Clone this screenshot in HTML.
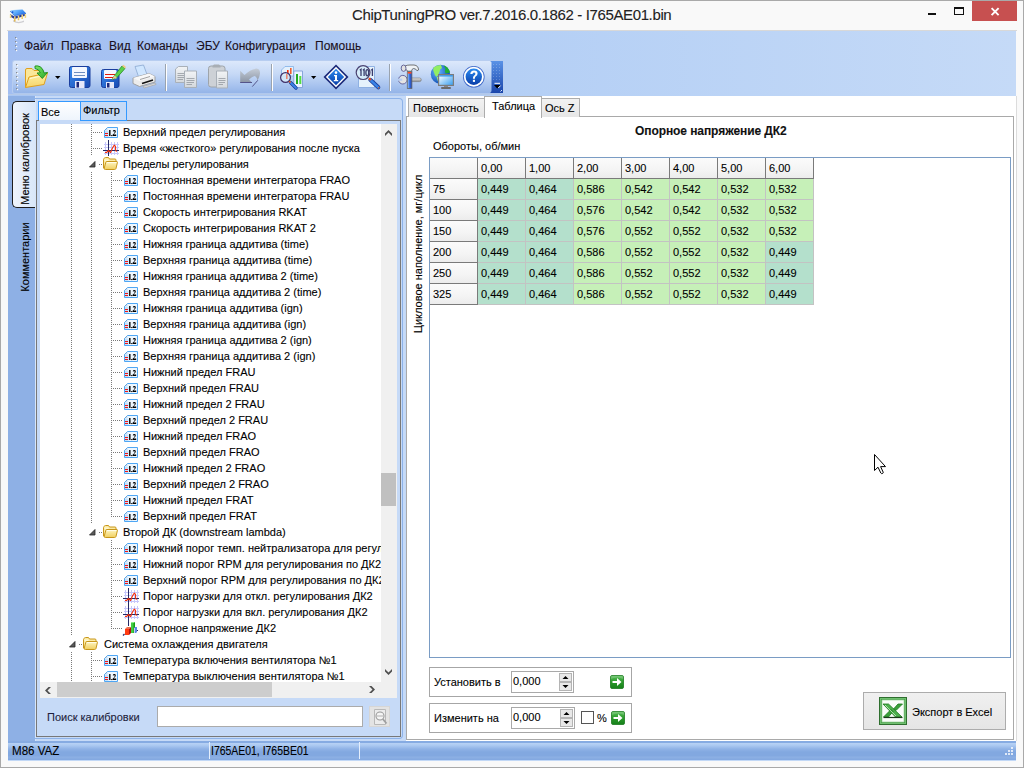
<!DOCTYPE html>
<html><head><meta charset="utf-8">
<style>
*{box-sizing:border-box}
html,body{margin:0;padding:0;width:1024px;height:768px;overflow:hidden;background:#f9f9f9}
body{position:relative;font-family:"Liberation Sans",sans-serif;font-size:11px;color:#000}
.a{position:absolute}
svg.a{overflow:visible}
.t{position:absolute;white-space:nowrap;font-size:11px;line-height:13px;-webkit-text-stroke:0.1px currentColor}
.m{position:absolute;white-space:nowrap;font-size:12px;line-height:14px;color:#1a1020;-webkit-text-stroke:0.1px currentColor}
.dv{position:absolute;width:1px;background:repeating-linear-gradient(180deg,#7a7a7a 0 1px,transparent 1px 2px)}
.dh{position:absolute;height:1px;background:repeating-linear-gradient(90deg,#7a7a7a 0 1px,transparent 1px 2px)}
.c{position:absolute;border-right:1px solid #c3c3c3;border-bottom:1px solid #c3c3c3}
.hc{position:absolute;background:linear-gradient(180deg,#fbfbfb 0%,#f4f4f4 60%,#ececec 100%);border-right:1px solid #7a7a7a;border-bottom:1px solid #7a7a7a}
</style></head><body>

<svg width="0" height="0" style="position:absolute">
<defs>
<linearGradient id="g12" x1="0" y1="0" x2="0" y2="1"><stop offset="0" stop-color="#f4faff"/><stop offset="1" stop-color="#cfe6fb"/></linearGradient>
<linearGradient id="gfold" x1="0" y1="0" x2="0" y2="1"><stop offset="0" stop-color="#fff6c0"/><stop offset="1" stop-color="#f0cf60"/></linearGradient>
<symbol id="i12" viewBox="0 0 14 11">
 <path d="M3.5 0.5 H13.5 V10.5 H0.5 V3.5 Z" fill="#eef7ff" stroke="#4ea6f4"/>
 <path d="M1 4 H4.5 V10 H1 Z" fill="#c4e2fc"/>
 <path d="M1 3.5 L3.5 1 V3.5 Z" fill="#bcdaf5"/>
 <path d="M0.5 3.5 L3.5 0.5" stroke="#6d9cc8" stroke-width="0.9" stroke-dasharray="0.8 0.6"/>
 <rect x="1" y="6" width="3" height="1" fill="#f01414"/>
 <rect x="1" y="8" width="3" height="1" fill="#f01414"/>
 <rect x="5.1" y="3" width="1.4" height="6" fill="#000"/>
 <rect x="7.2" y="8" width="1.1" height="1.1" fill="#000"/>
 <path d="M8.7 4.2 Q9 3 10.3 3 Q11.8 3 11.8 4.4 Q11.8 5.4 10.6 6.6 L9.6 7.6 H12.2 V9 H8.6 V7.8 L10.2 6.2 Q10.6 5.7 10.6 4.6 Q10.6 4.1 10.2 4.1 Q9.9 4.1 9.8 4.6 Z" fill="#000"/>
</symbol>
<symbol id="igraph" viewBox="0 0 16 16">
 <path d="M2.5 2V15 M8.5 2V15 M11.5 2V15 M14.5 2V15 M1 4.5H16 M1 7.5H16 M1 13.5H16" stroke="#c6c6fb" stroke-width="1"/>
 <path d="M5.5 0V16 M0 10.5H16" stroke="#252a66" stroke-width="1"/>
 <path d="M2 12.5 L3.5 12.5 L4.5 11.5 L5.5 10.5 L7.5 12.5 L8.5 10.5 L8.8 9.5 L9.5 8 L10.5 6.2 L11.5 5.2 L12.5 6.5 L12.6 10 L13.5 11.8" fill="none" stroke="#f5300a" stroke-width="1.1" stroke-linejoin="round"/>
</symbol>
<symbol id="ifold" viewBox="0 0 16 14">
 <path d="M1.5 12 V3.5 Q1.5 2.5 2.5 2 L3.5 1.5 H6.5 L7.5 3 H13 Q14 3 14 4 V7 L2 12.5 Z" fill="#fbeaa2" stroke="#c8961a"/>
 <path d="M2.5 3.5 H6.5 V5 H2.5 Z" fill="#fff8d0"/>
 <path d="M2.2 12.3 L3.8 6.3 Q4 5.5 5 5.5 H15 Q15.6 5.6 15.4 6.5 L14 12.5 Q13.6 13.5 12.6 13.5 H3.5 Q2 13.5 2.2 12.3 Z" fill="url(#gfold)" stroke="#c8961a"/>
 <path d="M4.8 6.6 H14.3" stroke="#fffef0" stroke-width="1"/>
</symbol>
<symbol id="ibar" viewBox="0 0 16 16">
 <path d="M6.5 0V6" stroke="#252a66"/>
 <path d="M1 15.5 L2.5 14" stroke="#252a66" stroke-width="1.2"/>
 <path d="M15 10.5 H17" stroke="#252a66" stroke-width="1.2"/>
 <path d="M3 9 H7 V15 H3 Z" fill="#ff3a10"/>
 <path d="M3 9 L5 7 H9 L7 9 Z" fill="#f07050"/>
 <path d="M7 9 L9 7 V13 L7 15 Z" fill="#b01010"/>
 <path d="M9 3 L10 2 H13 V13 H9 Z" fill="#44cc44"/>
 <path d="M11.5 2 H13 V12 L12 13 H11.5 Z" fill="#14a014"/>
 <path d="M9 3 L10 2 H13 L12 3 Z" fill="#88f088"/>
 <path d="M12 8 L13 7 H15 V12 L14 13 H12 Z" fill="#5a8ae0"/>
 <path d="M12 8 H13 V13 H12 Z" fill="#c8c8ff"/>
</symbol>
<symbol id="iexp" viewBox="0 0 7 7">
 <path d="M6 0.5 V6 H0.5 Z" fill="#595959" stroke="#262626" stroke-width="0.8" stroke-linejoin="round"/>
</symbol>
</defs></svg>

<div class="a" style="left:0;top:0;width:1024px;height:768px;border:1px solid #a9a9a9;background:#f9f9f9"></div>
<svg class="a" style="left:0;top:0" width="40" height="30" viewBox="0 0 40 30">
<defs><linearGradient id="chipTop" x1="0" y1="0" x2="1" y2="0.6"><stop offset="0" stop-color="#a8d8ff"/><stop offset="0.5" stop-color="#5aa8f8"/><stop offset="1" stop-color="#1e6ee8"/></linearGradient>
<linearGradient id="pinG" x1="0" y1="0" x2="0" y2="1"><stop offset="0" stop-color="#ffe890"/><stop offset="1" stop-color="#e0b040"/></linearGradient></defs>
<path d="M13 20 Q18 23.5 24 20.5 L24 22 Q18 24.5 13 21.5 Z" fill="#b0b0b8" opacity="0.6"/>
<path d="M10 14 L14.5 16.5 L26 13.5 L26 15.5 L14.5 19 L10 16.5 Z" fill="#2a3a90"/>
<path d="M10 11 Q11 10 13 10 L22.5 9.6 L26 13.3 L14.5 15.8 Z" fill="url(#chipTop)"/>
<path d="M10 11 L14.5 15.8 L26 13.3" fill="none" stroke="#1a5ad0" stroke-width="0.6"/>
<circle cx="12.6" cy="12.1" r="0.9" fill="#0a50d8"/>
<path d="M10.6 14.5 V18 M14.8 16.6 V21.5 M18.5 15.8 V20.3 M22.2 14.8 V19 M25.4 14 V17.8" stroke="url(#pinG)" stroke-width="1.5"/>
</svg>
<div class="t" style="left:352px;top:7px;font-size:15px;line-height:16px;letter-spacing:-0.37px;color:#222">ChipTuningPRO ver.7.2016.0.1862 - I765AE01.bin</div>
<div class="a" style="left:928px;top:13px;width:8px;height:2px;background:#111"></div>
<div class="a" style="left:954px;top:7px;width:10px;height:8px;border:1px solid #111;border-top-width:2px"></div>
<div class="a" style="left:972px;top:1px;width:45px;height:20px;background:#c75050"></div>
<svg class="a" style="left:990px;top:7px" width="10" height="9" viewBox="0 0 10 9"><path d="M1.6 1.2 L8.6 8.2 M8.6 1.2 L1.6 8.2" stroke="#fff" stroke-width="1.9"/></svg>
<div class="a" style="left:7px;top:30px;width:1010px;height:1px;background:#d8d8d8"></div>
<div class="a" style="left:8px;top:31px;width:1008px;height:730px;background:#c2d8f6"></div>
<div class="a" style="left:8px;top:31px;width:1008px;height:65px;background:linear-gradient(90deg,#a2bef1 0%,#b4cff5 50%,#c5daf7 100%)"></div>
<svg class="a" style="left:14px;top:36px" width="5" height="18"><rect x="1" y="1" width="1.2" height="1.2" fill="#8a8a8a"/><rect x="2" y="2" width="1.2" height="1.2" fill="#fff"/><rect x="1" y="5" width="1.2" height="1.2" fill="#8a8a8a"/><rect x="2" y="6" width="1.2" height="1.2" fill="#fff"/><rect x="1" y="9" width="1.2" height="1.2" fill="#8a8a8a"/><rect x="2" y="10" width="1.2" height="1.2" fill="#fff"/><rect x="1" y="13" width="1.2" height="1.2" fill="#8a8a8a"/><rect x="2" y="14" width="1.2" height="1.2" fill="#fff"/></svg>
<div class="m" style="left:24px;top:39px">Файл</div>
<div class="m" style="left:61px;top:39px">Правка</div>
<div class="m" style="left:109px;top:39px">Вид</div>
<div class="m" style="left:137px;top:39px">Команды</div>
<div class="m" style="left:196px;top:39px">ЭБУ</div>
<div class="m" style="left:225px;top:39px">Конфигурация</div>
<div class="m" style="left:315px;top:39px">Помощь</div>
<div class="a" style="left:8px;top:94px;width:496px;height:1px;background:#b4c9e8"></div>
<div class="a" style="left:8px;top:95px;width:397px;height:1px;background:#a9c6f3"></div>
<div class="a" style="left:12px;top:60px;width:492px;height:34px;border-radius:3px;background:linear-gradient(180deg,#dce8fb 0%,#c6d9f6 40%,#a9c4ef 75%,#94b4e8 100%);border:1px solid #b7cdf0;border-bottom-color:#b0c8ee"></div>
<svg class="a" style="left:15px;top:63px" width="5" height="30"><rect x="1" y="1" width="1.2" height="1.2" fill="#8a8a8a"/><rect x="2" y="2" width="1.2" height="1.2" fill="#fff"/><rect x="1" y="5" width="1.2" height="1.2" fill="#8a8a8a"/><rect x="2" y="6" width="1.2" height="1.2" fill="#fff"/><rect x="1" y="9" width="1.2" height="1.2" fill="#8a8a8a"/><rect x="2" y="10" width="1.2" height="1.2" fill="#fff"/><rect x="1" y="13" width="1.2" height="1.2" fill="#8a8a8a"/><rect x="2" y="14" width="1.2" height="1.2" fill="#fff"/><rect x="1" y="17" width="1.2" height="1.2" fill="#8a8a8a"/><rect x="2" y="18" width="1.2" height="1.2" fill="#fff"/><rect x="1" y="21" width="1.2" height="1.2" fill="#8a8a8a"/><rect x="2" y="22" width="1.2" height="1.2" fill="#fff"/><rect x="1" y="25" width="1.2" height="1.2" fill="#8a8a8a"/><rect x="2" y="26" width="1.2" height="1.2" fill="#fff"/></svg>
<svg class="a" style="left:0;top:0" width="520" height="100" viewBox="0 0 520 100">
<defs>
<linearGradient id="tgFold" x1="0" y1="0" x2="0" y2="1"><stop offset="0" stop-color="#fff2a8"/><stop offset="1" stop-color="#f6d46a"/></linearGradient>
<linearGradient id="tgGreen" x1="0" y1="0" x2="1" y2="1"><stop offset="0" stop-color="#7ee86a"/><stop offset="1" stop-color="#2aa82a"/></linearGradient>
<linearGradient id="tgFlop" x1="0" y1="0" x2="1" y2="1"><stop offset="0" stop-color="#3a8ef0"/><stop offset="1" stop-color="#1848b0"/></linearGradient>
<linearGradient id="tgBlue" x1="0" y1="0" x2="0" y2="1"><stop offset="0" stop-color="#2a8af0"/><stop offset="1" stop-color="#0a3ea8"/></linearGradient>
<linearGradient id="tgOver" x1="0" y1="0" x2="0" y2="1"><stop offset="0" stop-color="#5a92e6"/><stop offset="1" stop-color="#1a46ac"/></linearGradient>
<linearGradient id="tgGray" x1="0" y1="0" x2="0" y2="1"><stop offset="0" stop-color="#f2f4f6"/><stop offset="1" stop-color="#d4d8dc"/></linearGradient>
<radialGradient id="tgGlobe" cx="0.35" cy="0.35" r="0.7"><stop offset="0" stop-color="#6ab8ff"/><stop offset="1" stop-color="#0a48b0"/></radialGradient>
</defs>
<!-- open folder -->
<path d="M25.5 87 V70 Q25.5 68.5 27 68.5 H32 L34 70.5 H41 V76 Z" fill="#fbe79a" stroke="#e0a01e"/>
<path d="M25.5 87.5 L29 77 L47.5 73 L44 84.5 Z" fill="url(#tgFold)" stroke="#e0a01e" stroke-linejoin="round"/>
<path d="M30 78.5 L45.5 75" stroke="#fff8d8" stroke-width="1"/>
<path d="M35 66 Q41 65 43.5 71 L44 73 L47.5 72.5 L42.3 78.5 L37 73 L40.3 72.8 Q39 69 35 68.5 Z" fill="url(#tgGreen)" stroke="#1a8a1a" stroke-width="0.9" stroke-linejoin="round"/>
<path d="M55 76 H60.5 L57.75 79 Z" fill="#000"/>
<!-- save -->
<rect x="69.5" y="66.5" width="20.5" height="21" rx="2" fill="url(#tgFlop)" stroke="#1a3e9e"/>
<rect x="72" y="67" width="15" height="11" rx="1" fill="#f4f8ff"/>
<path d="M74 72.5 H85 M74 75.5 H85" stroke="#6f8fc0" stroke-width="1"/>
<rect x="75" y="81" width="9.5" height="7" fill="#e6e8fa"/>
<rect x="76.5" y="82" width="2.5" height="5.5" fill="#1e2a7a"/>
<!-- save as -->
<rect x="101.5" y="69.5" width="17.5" height="18" rx="2" fill="url(#tgFlop)" stroke="#1a3e9e"/>
<rect x="104" y="70" width="12.5" height="9" rx="1" fill="#f4f8ff"/>
<path d="M105 74.5 H115 M105 77.5 H115" stroke="#e01a0a" stroke-width="1"/>
<rect x="106" y="82" width="8" height="6" fill="#e6e8fa"/>
<rect x="107" y="83" width="2.5" height="4.5" fill="#1e2a7a"/>
<path d="M112 79.5 L114.5 75.5 L122 66 L125 68.5 L117 77.5 Z" fill="#5ad24a" stroke="#2a8a2a" stroke-width="0.8"/>
<path d="M122 66 L123.5 64.8 L126 67 L125 68.5 Z" fill="#f0c880"/>
<path d="M112 79.5 L114.5 75.5 L117 77.5 Z" fill="#e8c890"/>
<!-- printer -->
<path d="M135 66.5 L143.5 65 L147 74.5 L138.5 76.5 Z" fill="#cfe6ff" stroke="#8aa8d0" stroke-width="0.8"/>
<path d="M133 78 L149 73.5 L155 76.5 L155 82 L139.5 86.5 L133 83.5 Z" fill="#ececec" stroke="#9a9a9a" stroke-width="0.9" stroke-linejoin="round"/>
<path d="M133 78 L149 73.5 L155 76.5 L139.5 81 Z" fill="#f8f8f8"/>
<path d="M142 83.5 L153 80" stroke="#111" stroke-width="1.6"/>
<path d="M143 86.5 L155.5 83 L156 84.5 L144 88 Z" fill="#dcdcdc" stroke="#a0a0a0" stroke-width="0.6"/>
<path d="M140 79.5 L150 76.5" stroke="#8a8a8a" stroke-width="0.8"/>
<!-- separator -->
<path d="M165.5 64 V91" stroke="#9aa3ae"/><path d="M166.5 64 V91" stroke="#fff"/>
<!-- copy (disabled) -->
<path d="M175.5 69 L178.5 66.5 H187.5 V82.5 H175.5 Z" fill="url(#tgGray)" stroke="#a9b0b8"/>
<path d="M177.5 73.5 H185 M177.5 75.5 H185 M177.5 77.5 H184 M177.5 79.5 H183" stroke="#8a8f96" stroke-width="0.7"/>
<path d="M184.5 71 H196.5 V87.5 H184.5 Z" fill="url(#tgGray)" stroke="#a9b0b8"/>
<path d="M186.5 78.5 H194.5 M186.5 80.5 H194.5 M186.5 82.5 H194 M186.5 84.5 H192" stroke="#8a8f96" stroke-width="0.7"/>
<!-- paste (disabled) -->
<rect x="208.5" y="66" width="16.5" height="21" rx="2.5" fill="#cdd1d6" stroke="#9ea4aa"/>
<path d="M212.5 66 L214 64.5 H219 L220.5 66 V67.5 H212.5 Z" fill="#a8aeb4"/>
<path d="M216.5 71 H227.5 V88 H216.5 Z" fill="url(#tgGray)" stroke="#a9b0b8"/>
<path d="M218.5 78.5 H225.5 M218.5 80.5 H225.5 M218.5 82.5 H225 M218.5 84.5 H223" stroke="#8a8f96" stroke-width="0.7"/>
<!-- undo (disabled) -->
<defs><linearGradient id="tgUndo" x1="0" y1="0" x2="0" y2="1"><stop offset="0" stop-color="#c4ccd6"/><stop offset="1" stop-color="#8a94a4"/></linearGradient></defs>
<path d="M240.2 70.8 L244.5 75 Q250 69.5 256.5 68.6 Q260.2 69 260 73.5 Q259.5 77.5 257.5 80.5 Q256.8 76.5 254.5 76 Q252 76.5 249 79.5 L252 82.8 H240.2 Z" fill="url(#tgUndo)"/>
<path d="M240.2 82.5 H252" stroke="#54548a" stroke-width="1"/>
<path d="M257.8 80.3 L252.3 86.6" stroke="#4a4a80" stroke-width="0.9"/>
<!-- separator -->
<path d="M271.5 64 V91" stroke="#9aa3ae"/><path d="M272.5 64 V91" stroke="#fff"/>
<!-- chart search -->
<path d="M281.5 70 L285 66.5 H293.5 V76 H281.5 Z" fill="#e4f0fc" stroke="#7fb0e8" stroke-width="0.8"/>
<rect x="287" y="70" width="1.6" height="4" fill="#ff2a00"/>
<rect x="290" y="68" width="1.6" height="6" fill="#f06030"/>
<path d="M293.8 71 H302.5 V87.5 H293.8 Z" fill="#eaf4ff" stroke="#7f9ed8" stroke-width="0.9"/>
<rect x="296" y="74" width="2" height="10" fill="#22aa22"/>
<rect x="299.3" y="76" width="2" height="8" fill="#55dd44"/>
<path d="M290.5 82.5 L296 88" stroke="#1a3c9a" stroke-width="3.4" stroke-linecap="round"/>
<path d="M290.5 82.5 L296 88" stroke="#3a84e8" stroke-width="1.8" stroke-linecap="round"/>
<circle cx="285.5" cy="77.5" r="4.9" fill="#d8ecfa" fill-opacity="0.8" stroke="#403068" stroke-width="1.2"/>
<path d="M289.2 81.2 L290.6 82.6" stroke="#f06020" stroke-width="1.6"/>
<rect x="286" y="74" width="1.6" height="5" fill="#f07050" opacity="0.8"/>
<path d="M311 76 H316.3 L313.6 79 Z" fill="#000"/>
<!-- info -->
<path d="M336 64.5 L348.5 77 L336 89.5 L323.5 77 Z" fill="#1a2878"/>
<path d="M336 66.8 L346.2 77 L336 87.2 L325.8 77 Z" fill="#fff"/>
<path d="M336 68.8 L344.2 77 L336 85.2 L327.8 77 Z" fill="url(#tgBlue)"/>
<circle cx="336" cy="72.6" r="1.3" fill="#fff"/>
<path d="M334 75 H337 V80 H338.2 V81.3 H333.8 V80 H335 V76.2 H334 Z" fill="#fff"/>
<!-- magnifier 1101 -->
<path d="M358.5 66.5 H374.5 V87.5 H358.5 Z" fill="#e6f2fc" stroke="#88ace0" stroke-width="0.9"/>
<circle cx="363.1" cy="72.6" r="6.9" fill="#d6ecfa" stroke="#4a4270" stroke-width="1.2"/>
<g stroke="#3a3c6c" stroke-width="1.3" fill="none">
<path d="M359.8 70.3 L361 69.3 V76"/><path d="M362.9 70.3 L364.1 69.3 V76"/>
<ellipse cx="367.3" cy="72.7" rx="1.4" ry="3.1"/>
<path d="M371.2 70.3 L372.4 69.3 V76"/>
</g>
<path d="M370.3 79.8 L378.3 87.3" stroke="#1a3c9a" stroke-width="4" stroke-linecap="round"/>
<path d="M370.3 79.8 L378.3 87.3" stroke="#3a84e8" stroke-width="2.4" stroke-linecap="round"/>
<path d="M369 78.3 L370.8 80" stroke="#f04a10" stroke-width="2"/>
<path d="M378.3 87.4 L379.2 88.2" stroke="#e06a20" stroke-width="1.2"/>
<!-- separator -->
<path d="M389.5 64 V91" stroke="#9aa3ae"/><path d="M390.5 64 V91" stroke="#fff"/>
<!-- tools -->
<defs><linearGradient id="tgBar" x1="0" y1="0" x2="0" y2="1"><stop offset="0" stop-color="#e8e8e8"/><stop offset="1" stop-color="#8c8c8c"/></linearGradient>
<linearGradient id="tgHandle" x1="0" y1="0" x2="1" y2="0"><stop offset="0" stop-color="#a8d8ff"/><stop offset="0.5" stop-color="#3a70e0"/><stop offset="1" stop-color="#1a3ca8"/></linearGradient></defs>
<rect x="405" y="78" width="16.3" height="3.6" rx="1.8" fill="url(#tgBar)" stroke="#777" stroke-width="0.6"/>
<circle cx="402.8" cy="79.7" r="4.3" fill="#e4e4e4" stroke="#5a5a96" stroke-width="0.9"/>
<rect x="398" y="78.6" width="4.2" height="2.2" fill="#b9cff3"/>
<rect x="407.3" y="71.5" width="4.6" height="17" fill="url(#tgHandle)" stroke="#666" stroke-width="0.8"/>
<rect x="407.8" y="72" width="3.6" height="1.6" fill="#ff4a20"/>
<path d="M405 66 Q407 65 410 65 H414 Q418.5 65.5 418.5 70 L417 70.8 Q416 68.5 413.5 68.5 Q411.8 68.8 411.5 71.2 H407.5 Q406.8 69.3 405 69 Z" fill="#eef2f6" stroke="#555" stroke-width="0.8"/>
<ellipse cx="403.6" cy="68.2" rx="2.4" ry="3.2" fill="#e2e2e2" stroke="#5a5a90" stroke-width="0.9"/>
<!-- globe monitor -->
<circle cx="440.4" cy="74.3" r="9.6" fill="url(#tgGlobe)"/>
<path d="M433.5 67.5 Q436.5 64.8 441 65 L442 68 Q439.5 69 439.5 72 Q438.5 75 436.5 77 Q434.5 75 434 72.5 Q432.5 70 433.5 67.5 Z" fill="#92ee62"/>
<path d="M443.5 65.3 Q448.5 66.8 450 72.5 L445.5 73.5 Q444.5 70 445.5 68.5 Z" fill="#20b030"/>
<path d="M437.5 77 Q438 81 440 83" stroke="#a8e870" stroke-width="1.5" fill="none"/>
<rect x="438" y="74" width="16" height="12" fill="#7c7c7c"/>
<defs><linearGradient id="tgScr" x1="0" y1="0" x2="1" y2="1"><stop offset="0" stop-color="#ffffff"/><stop offset="1" stop-color="#3aa0f0"/></linearGradient></defs>
<rect x="439.2" y="75.2" width="13.6" height="9.6" fill="url(#tgScr)"/>
<rect x="439.2" y="75.2" width="13.6" height="1.3" fill="#2a90ea"/>
<rect x="444" y="86" width="4" height="1.2" fill="#888"/>
<rect x="441" y="87" width="10" height="2" rx="1" fill="#6a6a6a"/>
<!-- help -->
<circle cx="473.8" cy="76.8" r="10.8" fill="#3a66c8"/>
<circle cx="473.8" cy="76.8" r="10" fill="#fff"/>
<circle cx="473.8" cy="76.8" r="8.2" fill="url(#tgBlue)"/>
<path d="M470.3 74 Q470.5 70.5 474 70.5 Q477.6 70.5 477.6 73.6 Q477.6 75.4 475.6 76.5 Q474.9 77 474.9 78.8 H472.9 Q472.8 76.4 474.2 75.5 Q475.4 74.8 475.4 73.8 Q475.4 72.5 474 72.5 Q472.6 72.5 472.5 74 Z" fill="#fff"/>
<rect x="472.9" y="79.8" width="2.1" height="2.1" fill="#fff"/>
<!-- overflow -->
<defs><pattern id="tgDots" width="3" height="3" patternUnits="userSpaceOnUse"><rect x="1" y="1" width="1" height="1" fill="#ffffff" opacity="0.22"/></pattern></defs>
<path d="M490 61 H503 V93 H490 Q491.5 92 491.5 90.5 V62.5 Q491.5 61.5 490 61 Z" fill="url(#tgOver)"/>
<rect x="492" y="62" width="10" height="20" fill="url(#tgDots)"/>
<path d="M494.5 83.3 H500" stroke="#fff" stroke-width="1"/>
<path d="M494 85 H500.5 L497.2 88.5 Z" fill="#000"/>
<path d="M498.3 88 L500.6 85.6" stroke="#fff" stroke-width="1"/>
<path d="M500.5 91.5 L502 90" stroke="#dfe8f8" stroke-width="1"/>
</svg>

<div class="a" style="left:8px;top:96px;width:28px;height:645px;background:#8eb0e5"></div>
<div class="a" style="left:36px;top:96px;width:369px;height:645px;background:#c6daf7"></div>
<div class="a" style="left:12px;top:101px;width:23px;height:107px;border:1px solid #1e1e1e;border-right:none;border-radius:5px 0 0 5px;background:linear-gradient(90deg,#eef4fc,#d9e7f9)"></div>
<div class="a" style="left:35px;top:96px;width:1px;height:645px;background:#d8e6f9"></div>
<div class="t" style="left:25px;top:159px;transform:translate(-50%,-50%) rotate(-90deg)">Меню калибровок</div>
<div class="t" style="left:25px;top:257px;transform:translate(-50%,-50%) rotate(-90deg)">Комментарии</div>
<div class="a" style="left:30px;top:98px;width:373px;height:641px;border:1px solid #8db2e8;border-left:none;border-radius:0 4px 4px 0"></div>
<div class="a" style="left:36px;top:120px;width:365px;height:617px;border:1px solid #787878;border-top:none"></div>
<div class="a" style="left:126px;top:120px;width:275px;height:1px;background:#787878"></div>
<div class="a" style="left:38px;top:101px;width:43px;height:19px;border:1px solid #3399ff;border-right:none;border-bottom:none;background:linear-gradient(180deg,#ffffff,#eef4fc)"></div>
<div class="a" style="left:36px;top:120px;width:3px;height:1px;background:#787878"></div>
<div class="t" style="left:41px;top:106px">Все</div>
<div class="a" style="left:80px;top:101px;width:47px;height:20px;border:1px solid #3399ff;background:#c5daf6"></div>
<div class="t" style="left:83px;top:104px">Фильтр</div>
<div class="a" style="left:40px;top:124px;width:341px;height:558px;background:#fff;overflow:hidden">
<div class="dv" style="left:31px;top:0px;height:512px"></div>
<div class="dv" style="left:31px;top:528px;height:30px"></div>
<div class="dv" style="left:51px;top:0px;height:32px"></div>
<div class="dv" style="left:51px;top:48px;height:352px"></div>
<div class="dv" style="left:51px;top:528px;height:30px"></div>
<div class="dv" style="left:71px;top:48px;height:345px"></div>
<div class="dv" style="left:71px;top:416px;height:89px"></div>
<div class="dh" style="left:53px;top:8px;width:9px"></div>
<svg class="a" style="left:64px;top:3px" width="14" height="11"><use href="#i12"/></svg>
<div class="t" style="left:83px;top:2px;color:#000">Верхний предел регулирования</div>
<div class="dh" style="left:53px;top:24px;width:9px"></div>
<svg class="a" style="left:63px;top:16px" width="16" height="16"><use href="#igraph"/></svg>
<div class="t" style="left:83px;top:18px;color:#000">Время «жесткого» регулирования после пуска</div>
<svg class="a" style="left:49px;top:37px" width="7" height="7"><use href="#iexp"/></svg>
<div class="dh" style="left:59px;top:40px;width:3px"></div>
<svg class="a" style="left:62px;top:32px" width="16" height="14"><use href="#ifold"/></svg>
<div class="t" style="left:83px;top:34px;color:#000">Пределы регулирования</div>
<div class="dh" style="left:73px;top:56px;width:9px"></div>
<svg class="a" style="left:84px;top:51px" width="14" height="11"><use href="#i12"/></svg>
<div class="t" style="left:103px;top:50px;color:#000">Постоянная времени интегратора FRAO</div>
<div class="dh" style="left:73px;top:72px;width:9px"></div>
<svg class="a" style="left:84px;top:67px" width="14" height="11"><use href="#i12"/></svg>
<div class="t" style="left:103px;top:66px;color:#000">Постоянная времени интегратора FRAU</div>
<div class="dh" style="left:73px;top:88px;width:9px"></div>
<svg class="a" style="left:84px;top:83px" width="14" height="11"><use href="#i12"/></svg>
<div class="t" style="left:103px;top:82px;color:#000">Скорость интегрирования RKAT</div>
<div class="dh" style="left:73px;top:104px;width:9px"></div>
<svg class="a" style="left:84px;top:99px" width="14" height="11"><use href="#i12"/></svg>
<div class="t" style="left:103px;top:98px;color:#000">Скорость интегрирования RKAT 2</div>
<div class="dh" style="left:73px;top:120px;width:9px"></div>
<svg class="a" style="left:84px;top:115px" width="14" height="11"><use href="#i12"/></svg>
<div class="t" style="left:103px;top:114px;color:#000">Нижняя граница аддитива (time)</div>
<div class="dh" style="left:73px;top:136px;width:9px"></div>
<svg class="a" style="left:84px;top:131px" width="14" height="11"><use href="#i12"/></svg>
<div class="t" style="left:103px;top:130px;color:#000">Верхняя граница аддитива (time)</div>
<div class="dh" style="left:73px;top:152px;width:9px"></div>
<svg class="a" style="left:84px;top:147px" width="14" height="11"><use href="#i12"/></svg>
<div class="t" style="left:103px;top:146px;color:#000">Нижняя граница аддитива 2 (time)</div>
<div class="dh" style="left:73px;top:168px;width:9px"></div>
<svg class="a" style="left:84px;top:163px" width="14" height="11"><use href="#i12"/></svg>
<div class="t" style="left:103px;top:162px;color:#000">Верхняя граница аддитива 2 (time)</div>
<div class="dh" style="left:73px;top:184px;width:9px"></div>
<svg class="a" style="left:84px;top:179px" width="14" height="11"><use href="#i12"/></svg>
<div class="t" style="left:103px;top:178px;color:#000">Нижняя граница аддитива (ign)</div>
<div class="dh" style="left:73px;top:200px;width:9px"></div>
<svg class="a" style="left:84px;top:195px" width="14" height="11"><use href="#i12"/></svg>
<div class="t" style="left:103px;top:194px;color:#000">Верхняя граница аддитива (ign)</div>
<div class="dh" style="left:73px;top:216px;width:9px"></div>
<svg class="a" style="left:84px;top:211px" width="14" height="11"><use href="#i12"/></svg>
<div class="t" style="left:103px;top:210px;color:#000">Нижняя граница аддитива 2 (ign)</div>
<div class="dh" style="left:73px;top:232px;width:9px"></div>
<svg class="a" style="left:84px;top:227px" width="14" height="11"><use href="#i12"/></svg>
<div class="t" style="left:103px;top:226px;color:#000">Верхняя граница аддитива 2 (ign)</div>
<div class="dh" style="left:73px;top:248px;width:9px"></div>
<svg class="a" style="left:84px;top:243px" width="14" height="11"><use href="#i12"/></svg>
<div class="t" style="left:103px;top:242px;color:#000">Нижний предел FRAU</div>
<div class="dh" style="left:73px;top:264px;width:9px"></div>
<svg class="a" style="left:84px;top:259px" width="14" height="11"><use href="#i12"/></svg>
<div class="t" style="left:103px;top:258px;color:#000">Верхний предел FRAU</div>
<div class="dh" style="left:73px;top:280px;width:9px"></div>
<svg class="a" style="left:84px;top:275px" width="14" height="11"><use href="#i12"/></svg>
<div class="t" style="left:103px;top:274px;color:#000">Нижний предел 2 FRAU</div>
<div class="dh" style="left:73px;top:296px;width:9px"></div>
<svg class="a" style="left:84px;top:291px" width="14" height="11"><use href="#i12"/></svg>
<div class="t" style="left:103px;top:290px;color:#000">Верхний предел 2 FRAU</div>
<div class="dh" style="left:73px;top:312px;width:9px"></div>
<svg class="a" style="left:84px;top:307px" width="14" height="11"><use href="#i12"/></svg>
<div class="t" style="left:103px;top:306px;color:#000">Нижний предел FRAO</div>
<div class="dh" style="left:73px;top:328px;width:9px"></div>
<svg class="a" style="left:84px;top:323px" width="14" height="11"><use href="#i12"/></svg>
<div class="t" style="left:103px;top:322px;color:#000">Верхний предел FRAO</div>
<div class="dh" style="left:73px;top:344px;width:9px"></div>
<svg class="a" style="left:84px;top:339px" width="14" height="11"><use href="#i12"/></svg>
<div class="t" style="left:103px;top:338px;color:#000">Нижний предел 2 FRAO</div>
<div class="dh" style="left:73px;top:360px;width:9px"></div>
<svg class="a" style="left:84px;top:355px" width="14" height="11"><use href="#i12"/></svg>
<div class="t" style="left:103px;top:354px;color:#000">Верхний предел 2 FRAO</div>
<div class="dh" style="left:73px;top:376px;width:9px"></div>
<svg class="a" style="left:84px;top:371px" width="14" height="11"><use href="#i12"/></svg>
<div class="t" style="left:103px;top:370px;color:#000">Нижний предел FRAT</div>
<div class="dh" style="left:73px;top:392px;width:9px"></div>
<svg class="a" style="left:84px;top:387px" width="14" height="11"><use href="#i12"/></svg>
<div class="t" style="left:103px;top:386px;color:#000">Верхний предел FRAT</div>
<svg class="a" style="left:49px;top:405px" width="7" height="7"><use href="#iexp"/></svg>
<div class="dh" style="left:59px;top:408px;width:3px"></div>
<svg class="a" style="left:62px;top:400px" width="16" height="14"><use href="#ifold"/></svg>
<div class="t" style="left:83px;top:402px;color:#000">Второй ДК (downstream lambda)</div>
<div class="dh" style="left:73px;top:424px;width:9px"></div>
<svg class="a" style="left:84px;top:419px" width="14" height="11"><use href="#i12"/></svg>
<div class="t" style="left:103px;top:418px;color:#000">Нижний порог темп. нейтрализатора для регулирования</div>
<div class="dh" style="left:73px;top:440px;width:9px"></div>
<svg class="a" style="left:84px;top:435px" width="14" height="11"><use href="#i12"/></svg>
<div class="t" style="left:103px;top:434px;color:#000">Нижний порог RPM для регулирования по ДК2</div>
<div class="dh" style="left:73px;top:456px;width:9px"></div>
<svg class="a" style="left:84px;top:451px" width="14" height="11"><use href="#i12"/></svg>
<div class="t" style="left:103px;top:450px;color:#000">Верхний порог RPM для регулирования по ДК2</div>
<div class="dh" style="left:73px;top:472px;width:9px"></div>
<svg class="a" style="left:83px;top:464px" width="16" height="16"><use href="#igraph"/></svg>
<div class="t" style="left:103px;top:466px;color:#000">Порог нагрузки для откл. регулирования ДК2</div>
<div class="dh" style="left:73px;top:488px;width:9px"></div>
<svg class="a" style="left:83px;top:480px" width="16" height="16"><use href="#igraph"/></svg>
<div class="t" style="left:103px;top:482px;color:#000">Порог нагрузки для вкл. регулирования ДК2</div>
<div class="dh" style="left:73px;top:504px;width:9px"></div>
<svg class="a" style="left:82px;top:496px" width="16" height="16"><use href="#ibar"/></svg>
<div class="t" style="left:103px;top:498px;color:#000">Опорное напряжение ДК2</div>
<svg class="a" style="left:29px;top:517px" width="7" height="7"><use href="#iexp"/></svg>
<div class="dh" style="left:39px;top:520px;width:3px"></div>
<svg class="a" style="left:42px;top:512px" width="16" height="14"><use href="#ifold"/></svg>
<div class="t" style="left:64px;top:514px;color:#000">Система охлаждения двигателя</div>
<div class="dh" style="left:53px;top:536px;width:9px"></div>
<svg class="a" style="left:64px;top:531px" width="14" height="11"><use href="#i12"/></svg>
<div class="t" style="left:83px;top:530px;color:#000">Температура включения вентилятора №1</div>
<div class="dh" style="left:53px;top:552px;width:9px"></div>
<svg class="a" style="left:64px;top:547px" width="14" height="11"><use href="#i12"/></svg>
<div class="t" style="left:83px;top:546px;color:#000">Температура выключения вентилятора №1</div>
</div>
<div class="a" style="left:381px;top:124px;width:16px;height:558px;background:#f0f0f0"></div>
<svg class="a" style="left:384px;top:130px" width="9" height="7"><path d="M1 6 V3.5 L4.5 0 L8 3.5 V6 L4.5 2.5 Z" fill="#505050"/></svg>
<svg class="a" style="left:384px;top:669px" width="9" height="7"><path d="M1 0 V2.5 L4.5 6 L8 2.5 V0 L4.5 3.5 Z" fill="#505050"/></svg>
<div class="a" style="left:381px;top:473px;width:15px;height:33px;background:#c0c0c0"></div>
<div class="a" style="left:40px;top:682px;width:357px;height:16px;background:#f0f0f0"></div>
<div class="a" style="left:57px;top:682px;width:215px;height:15px;background:#cdcdcd"></div>
<svg class="a" style="left:45px;top:686px" width="7" height="9"><path d="M6 1 H3.5 L0 4.5 L3.5 8 H6 L2.5 4.5 Z" fill="#505050"/></svg>
<svg class="a" style="left:369px;top:685px" width="7" height="9"><path d="M0 1 H2.5 L6 4.5 L2.5 8 H0 L3.5 4.5 Z" fill="#505050"/></svg>
<div class="t" style="left:47px;top:711px;color:#1e1e3c">Поиск калибровки</div>
<div class="a" style="left:157px;top:706px;width:206px;height:21px;background:#fff;border:1px solid #ababab"></div>
<div class="a" style="left:369px;top:706px;width:21px;height:21px;background:#e3e3e3;border:1px solid #d6d6d6"></div>
<div class="a" style="left:406px;top:96px;width:610px;height:645px;background:#fff"></div>
<div class="a" style="left:406px;top:116px;width:608px;height:624px;border:1px solid #a9a9a9;background:#fff"></div>
<div class="a" style="left:1016px;top:96px;width:1px;height:645px;background:#dcdcdc"></div>
<div class="a" style="left:408px;top:98px;width:77px;height:19px;border:1px solid #adadad;border-bottom:none;background:linear-gradient(180deg,#f2f2f2,#e6e6e6)"></div>
<div class="t" style="left:413px;top:102px">Поверхность</div>
<div class="a" style="left:484px;top:96px;width:58px;height:22px;border:1px solid #adadad;border-bottom:none;background:#fff"></div>
<div class="t" style="left:492px;top:100px">Таблица</div>
<div class="a" style="left:541px;top:98px;width:39px;height:19px;border:1px solid #adadad;border-bottom:none;background:linear-gradient(180deg,#f2f2f2,#e6e6e6)"></div>
<div class="t" style="left:545px;top:102px">Ось Z</div>
<div class="t" style="left:635px;top:124px;font-weight:bold;font-size:12px;line-height:14px;color:#111;letter-spacing:-0.08px">Опорное напряжение ДК2</div>
<div class="t" style="left:433px;top:140px">Обороты, об/мин</div>
<div class="t" style="left:418px;top:254px;transform:translate(-50%,-50%) rotate(-90deg)">Цикловое наполнение, мг/цикл</div>
<div class="a" style="left:429px;top:157px;width:582px;height:501px;border:1px solid #7a9cc4;background:#fff"></div>
<div class="hc" style="left:430px;top:158px;width:48px;height:21px"></div>
<div class="hc" style="left:478px;top:158px;width:48px;height:21px"></div>
<div class="t" style="left:481px;top:162px">0,00</div>
<div class="hc" style="left:526px;top:158px;width:48px;height:21px"></div>
<div class="t" style="left:529px;top:162px">1,00</div>
<div class="hc" style="left:574px;top:158px;width:48px;height:21px"></div>
<div class="t" style="left:577px;top:162px">2,00</div>
<div class="hc" style="left:622px;top:158px;width:48px;height:21px"></div>
<div class="t" style="left:625px;top:162px">3,00</div>
<div class="hc" style="left:670px;top:158px;width:48px;height:21px"></div>
<div class="t" style="left:673px;top:162px">4,00</div>
<div class="hc" style="left:718px;top:158px;width:48px;height:21px"></div>
<div class="t" style="left:721px;top:162px">5,00</div>
<div class="hc" style="left:766px;top:158px;width:48px;height:21px"></div>
<div class="t" style="left:769px;top:162px">6,00</div>
<div class="hc" style="left:430px;top:179px;width:48px;height:21px"></div>
<div class="t" style="left:433px;top:183px">75</div>
<div class="c" style="left:478px;top:179px;width:48px;height:21px;background:#b4e0cc"></div>
<div class="t" style="left:481px;top:183px">0,449</div>
<div class="c" style="left:526px;top:179px;width:48px;height:21px;background:#b4e0cc"></div>
<div class="t" style="left:529px;top:183px">0,464</div>
<div class="c" style="left:574px;top:179px;width:48px;height:21px;background:#c6f0b8"></div>
<div class="t" style="left:577px;top:183px">0,586</div>
<div class="c" style="left:622px;top:179px;width:48px;height:21px;background:#c6f0b8"></div>
<div class="t" style="left:625px;top:183px">0,542</div>
<div class="c" style="left:670px;top:179px;width:48px;height:21px;background:#c6f0b8"></div>
<div class="t" style="left:673px;top:183px">0,542</div>
<div class="c" style="left:718px;top:179px;width:48px;height:21px;background:#c6f0b8"></div>
<div class="t" style="left:721px;top:183px">0,532</div>
<div class="c" style="left:766px;top:179px;width:48px;height:21px;background:#c6f0b8"></div>
<div class="t" style="left:769px;top:183px">0,532</div>
<div class="hc" style="left:430px;top:200px;width:48px;height:21px"></div>
<div class="t" style="left:433px;top:204px">100</div>
<div class="c" style="left:478px;top:200px;width:48px;height:21px;background:#b4e0cc"></div>
<div class="t" style="left:481px;top:204px">0,449</div>
<div class="c" style="left:526px;top:200px;width:48px;height:21px;background:#b4e0cc"></div>
<div class="t" style="left:529px;top:204px">0,464</div>
<div class="c" style="left:574px;top:200px;width:48px;height:21px;background:#c6f0b8"></div>
<div class="t" style="left:577px;top:204px">0,576</div>
<div class="c" style="left:622px;top:200px;width:48px;height:21px;background:#c6f0b8"></div>
<div class="t" style="left:625px;top:204px">0,542</div>
<div class="c" style="left:670px;top:200px;width:48px;height:21px;background:#c6f0b8"></div>
<div class="t" style="left:673px;top:204px">0,542</div>
<div class="c" style="left:718px;top:200px;width:48px;height:21px;background:#c6f0b8"></div>
<div class="t" style="left:721px;top:204px">0,532</div>
<div class="c" style="left:766px;top:200px;width:48px;height:21px;background:#c6f0b8"></div>
<div class="t" style="left:769px;top:204px">0,532</div>
<div class="hc" style="left:430px;top:221px;width:48px;height:21px"></div>
<div class="t" style="left:433px;top:225px">150</div>
<div class="c" style="left:478px;top:221px;width:48px;height:21px;background:#b4e0cc"></div>
<div class="t" style="left:481px;top:225px">0,449</div>
<div class="c" style="left:526px;top:221px;width:48px;height:21px;background:#b4e0cc"></div>
<div class="t" style="left:529px;top:225px">0,464</div>
<div class="c" style="left:574px;top:221px;width:48px;height:21px;background:#c6f0b8"></div>
<div class="t" style="left:577px;top:225px">0,576</div>
<div class="c" style="left:622px;top:221px;width:48px;height:21px;background:#c6f0b8"></div>
<div class="t" style="left:625px;top:225px">0,552</div>
<div class="c" style="left:670px;top:221px;width:48px;height:21px;background:#c6f0b8"></div>
<div class="t" style="left:673px;top:225px">0,552</div>
<div class="c" style="left:718px;top:221px;width:48px;height:21px;background:#c6f0b8"></div>
<div class="t" style="left:721px;top:225px">0,532</div>
<div class="c" style="left:766px;top:221px;width:48px;height:21px;background:#c6f0b8"></div>
<div class="t" style="left:769px;top:225px">0,532</div>
<div class="hc" style="left:430px;top:242px;width:48px;height:21px"></div>
<div class="t" style="left:433px;top:246px">200</div>
<div class="c" style="left:478px;top:242px;width:48px;height:21px;background:#b4e0cc"></div>
<div class="t" style="left:481px;top:246px">0,449</div>
<div class="c" style="left:526px;top:242px;width:48px;height:21px;background:#b4e0cc"></div>
<div class="t" style="left:529px;top:246px">0,464</div>
<div class="c" style="left:574px;top:242px;width:48px;height:21px;background:#c6f0b8"></div>
<div class="t" style="left:577px;top:246px">0,586</div>
<div class="c" style="left:622px;top:242px;width:48px;height:21px;background:#c6f0b8"></div>
<div class="t" style="left:625px;top:246px">0,552</div>
<div class="c" style="left:670px;top:242px;width:48px;height:21px;background:#c6f0b8"></div>
<div class="t" style="left:673px;top:246px">0,552</div>
<div class="c" style="left:718px;top:242px;width:48px;height:21px;background:#c6f0b8"></div>
<div class="t" style="left:721px;top:246px">0,532</div>
<div class="c" style="left:766px;top:242px;width:48px;height:21px;background:#b4e0cc"></div>
<div class="t" style="left:769px;top:246px">0,449</div>
<div class="hc" style="left:430px;top:263px;width:48px;height:21px"></div>
<div class="t" style="left:433px;top:267px">250</div>
<div class="c" style="left:478px;top:263px;width:48px;height:21px;background:#b4e0cc"></div>
<div class="t" style="left:481px;top:267px">0,449</div>
<div class="c" style="left:526px;top:263px;width:48px;height:21px;background:#b4e0cc"></div>
<div class="t" style="left:529px;top:267px">0,464</div>
<div class="c" style="left:574px;top:263px;width:48px;height:21px;background:#c6f0b8"></div>
<div class="t" style="left:577px;top:267px">0,586</div>
<div class="c" style="left:622px;top:263px;width:48px;height:21px;background:#c6f0b8"></div>
<div class="t" style="left:625px;top:267px">0,552</div>
<div class="c" style="left:670px;top:263px;width:48px;height:21px;background:#c6f0b8"></div>
<div class="t" style="left:673px;top:267px">0,552</div>
<div class="c" style="left:718px;top:263px;width:48px;height:21px;background:#c6f0b8"></div>
<div class="t" style="left:721px;top:267px">0,532</div>
<div class="c" style="left:766px;top:263px;width:48px;height:21px;background:#b4e0cc"></div>
<div class="t" style="left:769px;top:267px">0,449</div>
<div class="hc" style="left:430px;top:284px;width:48px;height:21px"></div>
<div class="t" style="left:433px;top:288px">325</div>
<div class="c" style="left:478px;top:284px;width:48px;height:21px;background:#b4e0cc"></div>
<div class="t" style="left:481px;top:288px">0,449</div>
<div class="c" style="left:526px;top:284px;width:48px;height:21px;background:#b4e0cc"></div>
<div class="t" style="left:529px;top:288px">0,464</div>
<div class="c" style="left:574px;top:284px;width:48px;height:21px;background:#c6f0b8"></div>
<div class="t" style="left:577px;top:288px">0,586</div>
<div class="c" style="left:622px;top:284px;width:48px;height:21px;background:#c6f0b8"></div>
<div class="t" style="left:625px;top:288px">0,552</div>
<div class="c" style="left:670px;top:284px;width:48px;height:21px;background:#c6f0b8"></div>
<div class="t" style="left:673px;top:288px">0,552</div>
<div class="c" style="left:718px;top:284px;width:48px;height:21px;background:#c6f0b8"></div>
<div class="t" style="left:721px;top:288px">0,532</div>
<div class="c" style="left:766px;top:284px;width:48px;height:21px;background:#b4e0cc"></div>
<div class="t" style="left:769px;top:288px">0,449</div>
<div class="a" style="left:429px;top:667px;width:203px;height:30px;border:1px solid #a6a6a6"></div>
<div class="t" style="left:434px;top:676px">Установить в</div>
<div class="a" style="left:511px;top:671px;width:63px;height:22px;border:1px solid #a9a9a9;background:#fff"></div>
<div class="t" style="left:513px;top:675px">0,000</div>
<div class="a" style="left:429px;top:703px;width:203px;height:30px;border:1px solid #a6a6a6"></div>
<div class="t" style="left:434px;top:712px">Изменить на</div>
<div class="a" style="left:511px;top:707px;width:64px;height:22px;border:1px solid #a9a9a9;background:#fff"></div>
<div class="t" style="left:513px;top:711px">0,000</div>
<div class="a" style="left:559px;top:673px;width:13px;height:9px;border:1px solid #b4b4b4;background:#e8e8e8"></div>
<div class="a" style="left:559px;top:682px;width:13px;height:9px;border:1px solid #b4b4b4;background:#e8e8e8"></div>
<svg class="a" style="left:559px;top:673px" width="13" height="18"><path d="M3.5 6 H9.5 L6.5 3 Z M3.5 12 H9.5 L6.5 15 Z" fill="#000"/></svg>
<div class="a" style="left:560px;top:709px;width:13px;height:9px;border:1px solid #b4b4b4;background:#e8e8e8"></div>
<div class="a" style="left:560px;top:718px;width:13px;height:9px;border:1px solid #b4b4b4;background:#e8e8e8"></div>
<svg class="a" style="left:560px;top:709px" width="13" height="18"><path d="M3.5 6 H9.5 L6.5 3 Z M3.5 12 H9.5 L6.5 15 Z" fill="#000"/></svg>
<div class="a" style="left:581px;top:711px;width:13px;height:13px;border:1px solid #555;background:#fff"></div>
<div class="t" style="left:597px;top:712px">%</div>
<svg class="a" style="left:610px;top:675px" width="14" height="14"><defs><linearGradient id="gArr1" x1="0" y1="0" x2="0" y2="1"><stop offset="0" stop-color="#5cc05c"/><stop offset="0.5" stop-color="#2a9a2a"/><stop offset="1" stop-color="#16801a"/></linearGradient></defs><rect x="0.5" y="0.5" width="13" height="13" rx="1.5" fill="url(#gArr1)" stroke="#1a7a1e" stroke-width="0.8"/><path d="M2.5 6 H7 V3 L11.5 7 L7 11 V8 H2.5 Z" fill="#fff"/><path d="M0.8 4 Q7 1 13.2 4 V1.5 Q13 0.8 12 0.8 H2 Q0.8 0.8 0.8 2 Z" fill="#fff" opacity="0.18"/></svg>
<svg class="a" style="left:611px;top:711px" width="14" height="14"><defs><linearGradient id="gArr2" x1="0" y1="0" x2="0" y2="1"><stop offset="0" stop-color="#5cc05c"/><stop offset="0.5" stop-color="#2a9a2a"/><stop offset="1" stop-color="#16801a"/></linearGradient></defs><rect x="0.5" y="0.5" width="13" height="13" rx="1.5" fill="url(#gArr2)" stroke="#1a7a1e" stroke-width="0.8"/><path d="M2.5 6 H7 V3 L11.5 7 L7 11 V8 H2.5 Z" fill="#fff"/><path d="M0.8 4 Q7 1 13.2 4 V1.5 Q13 0.8 12 0.8 H2 Q0.8 0.8 0.8 2 Z" fill="#fff" opacity="0.18"/></svg>
<div class="a" style="left:863px;top:692px;width:143px;height:38px;border:1px solid #acacac;background:linear-gradient(180deg,#f0f0f0,#e5e5e5)"></div>
<svg class="a" style="left:879px;top:697px" width="28" height="28" viewBox="0 0 28 28">
<rect x="0.5" y="0.5" width="27" height="27" fill="#6fbf6f" stroke="#2e6e2e"/>
<rect x="2" y="2" width="24" height="24" fill="#3c9a3c"/>
<rect x="3" y="3" width="22" height="22" fill="#fafdfa" stroke="#a8d8a8" stroke-width="0.8"/>
<path d="M4 7 H9.5 L23 20 H16.5 Z" fill="#4cb04c" stroke="#1e7a1e" stroke-width="0.8"/>
<path d="M4.5 20 L12 12.5 L14 14.5 L9.5 20 Z" fill="#3aa03a" stroke="#1e7a1e" stroke-width="0.8"/>
<path d="M14.5 12 L19 7 H23.5 L17 13.5 Z" fill="#3aa03a" stroke="#1e7a1e" stroke-width="0.8"/>
<path d="M4.5 20.5 H23.5" stroke="#1a3a1a" stroke-width="1.2"/>
<path d="M6 8 L17 19" stroke="#d8f8d8" stroke-width="0.7"/>
</svg>
<div class="t" style="left:912px;top:706px">Экспорт в Excel</div>
<svg class="a" style="left:369px;top:706px" width="21" height="21" viewBox="0 0 21 21">
<path d="M5.5 3.5 H16.5 V18.5 H5.5 Z" fill="#ececec" stroke="#b8b8b8"/>
<circle cx="11" cy="10" r="4" fill="#f4f4f4" stroke="#9a9a9a" stroke-width="1.1"/>
<path d="M8 10 H14" stroke="#b0b0b0"/>
<path d="M13.8 13 L17.5 17.5" stroke="#a0a0a0" stroke-width="1.8"/>
</svg>
<svg class="a" style="left:873px;top:453px" width="16" height="22" viewBox="0 0 16 22">
<path d="M1.5 1.5 V17.5 L5 14.2 L7.8 20 Q8.5 21 9.6 20.5 Q10.5 20 10.1 19 L7.6 13.6 H12.5 Z" fill="#fff" stroke="#000" stroke-width="1" stroke-linejoin="round"/>
</svg>
<div class="a" style="left:8px;top:741px;width:1008px;height:19px;background:linear-gradient(180deg,#86abe2 0px,#86abe2 2px,#b8d2f5 2px,#aecbf2 4px,#8fb2e6 8px,#82a8e0 11px,#82a8e0 15px,#8db0e4 16px,#82a8e0 19px)"></div>
<div class="m" style="left:12px;top:744px;color:#000;transform:scaleX(0.965);transform-origin:0 0">M86 VAZ</div>
<div class="m" style="left:211px;top:744px;color:#000;transform:scaleX(0.87);transform-origin:0 0">I765AE01, I765BE01</div>
<div class="a" style="left:209px;top:742px;width:1px;height:17px;background:#e4eefc"></div>
<div class="a" style="left:359px;top:742px;width:1px;height:17px;background:#e4eefc"></div>
<svg class="a" style="left:1003px;top:746px" width="12" height="12"><g fill="#ffffff" opacity="0.75"><rect x="8" y="1" width="2" height="2"/><rect x="5" y="4" width="2" height="2"/><rect x="8" y="4" width="2" height="2"/><rect x="2" y="7" width="2" height="2"/><rect x="5" y="7" width="2" height="2"/><rect x="8" y="7" width="2" height="2"/></g></svg>
</body></html>
